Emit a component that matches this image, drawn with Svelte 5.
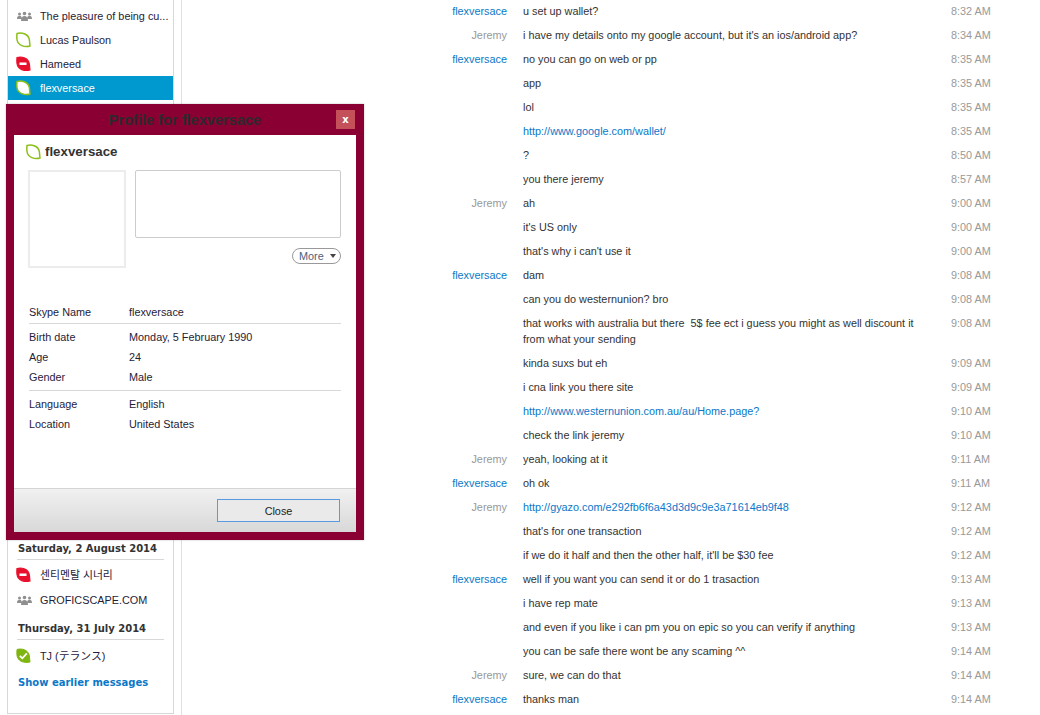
<script>
  const leaf = "M1 1.500C3 .9 6 .9 8.200 1.700c2.900 1 4.800 3.400 5.200 6.300.2 2 .4 4.300.6 6-2.200.6-6 .5-8.200-.4C3 12.500 1.300 10 1 7.500.7 5.500.8 3.500 1 1.500Z";
  const recent = [
    { s: "group", n: "The pleasure of being cu..." },
    { s: "away", n: "Lucas Paulson" },
    { s: "dnd", n: "Hameed" },
    { s: "away", n: "flexversace", sel: true }
  ];
  const F = "flexversace", J = "Jeremy";
  const chat = [
    [F, "u set up wallet?", "8:32 AM"],
    [J, "i have my details onto my google account, but it's an ios/android app?", "8:34 AM"],
    [F, "no you can go on web or pp", "8:35 AM"],
    ["", "app", "8:35 AM"],
    ["", "lol", "8:35 AM"],
    ["", "http://www.google.com/wallet/", "8:35 AM", 1],
    ["", "?", "8:50 AM"],
    ["", "you there jeremy", "8:57 AM"],
    [J, "ah", "9:00 AM"],
    ["", "it's US only", "9:00 AM"],
    ["", "that's why i can't use it", "9:00 AM"],
    [F, "dam", "9:08 AM"],
    ["", "can you do westernunion? bro", "9:08 AM"],
    ["", "that works with australia but there  5$ fee ect i guess you might as well discount it from what your sending", "9:08 AM"],
    ["", "kinda suxs but eh", "9:09 AM"],
    ["", "i cna link you there site", "9:09 AM"],
    ["", "http://www.westernunion.com.au/au/Home.page?", "9:10 AM", 1],
    ["", "check the link jeremy", "9:10 AM"],
    [J, "yeah, looking at it", "9:11 AM"],
    [F, "oh ok", "9:11 AM"],
    [J, "http://gyazo.com/e292fb6f6a43d3d9c9e3a71614eb9f48", "9:12 AM", 1],
    ["", "that's for one transaction", "9:12 AM"],
    ["", "if we do it half and then the other half, it'll be $30 fee", "9:12 AM"],
    [F, "well if you want you can send it or do 1 trasaction", "9:13 AM"],
    ["", "i have rep mate", "9:13 AM"],
    ["", "and even if you like i can pm you on epic so you can verify if anything", "9:13 AM"],
    ["", "you can be safe there wont be any scaming ^^", "9:14 AM"],
    [J, "sure, we can do that", "9:14 AM"],
    [F, "thanks man", "9:14 AM"]
  ];
</script>

{#snippet status(s, sel)}
  <svg class="ic" width="17" height="16" viewBox="0 0 17 16" aria-hidden="true">
    {#if s === "group"}
      <g fill="#8f8f8f">
        <circle cx="3.500" cy="6" r="1.500"/><circle cx="13.500" cy="6" r="1.500"/><circle cx="8.500" cy="5.500" r="1.800"/>
        <path d="M1 11c0-2 1-3.200 2.500-3.200S6 9 6 11ZM11 11c0-2 1-3.200 2.500-3.200S16 9 16 11Z"/>
        <path d="M5 13c0-3 1.300-5 3.500-5s3.500 2 3.500 5Z"/>
      </g>
    {:else if s === "away"}
      <path d={leaf} fill={sel ? "#fff" : "none"} stroke="#8cbf1a" stroke-width="1.500"/>
    {:else if s === "dnd"}
      <path d={leaf} fill="#e8112d" stroke="#e8112d" stroke-width="1.200"/>
      <rect x="3.500" y="6.500" width="7" height="2.500" fill="#fff"/>
    {:else}
      <path d={leaf} fill="#7fb510" stroke="#7fb510" stroke-width="1"/>
      <path d="M3.800 7.800l2.500 2.500 4.500-5" fill="none" stroke="#fff" stroke-width="1.800"/>
    {/if}
  </svg>
{/snippet}

<div class="page">
  <aside class="side">
    <div class="list top">
      {#each recent as r}
        <div class="row" class:sel={r.sel}>{@render status(r.s, r.sel)}<span>{r.n}</span></div>
      {/each}
    </div>
    <div class="list bottom">
      <div class="day">Saturday, 2 August 2014</div>
      <div class="row r1">{@render status("dnd")}<span>센티멘탈 시너리</span></div>
      <div class="row r2">{@render status("group")}<span>GROFICSCAPE.COM</span></div>
      <div class="day second">Thursday, 31 July 2014</div>
      <div class="row r3">{@render status("online")}<span>TJ (テランス)</span></div>
      <div class="earlier">Show earlier messages</div>
    </div>
  </aside>

  <main class="chat">
    {#each chat as m}
      <div class="msg">
        <div class="who" class:j={m[0] === J}>{m[0]}</div>
        <div class="text" class:link={m[3]}>{m[1]}</div>
        <div class="time">{m[2]}</div>
      </div>
    {/each}
  </main>

  <section class="modal">
    <header class="mhead">
      <h1>Profile for flexversace</h1>
      <button class="x">x</button>
    </header>
    <div class="mbody">
      <div class="content">
        <div class="pname">{@render status("away")}<strong>flexversace</strong></div>
        <div class="top-boxes">
          <div class="avatar"></div>
          <div class="right">
            <div class="mood"></div>
            <div class="more-wrap"><span class="more">More <i></i></span></div>
          </div>
        </div>
        <div class="group g1"><div class="d"><span>Skype Name</span><span>flexversace</span></div></div>
        <div class="group g2">
          <div class="d"><span>Birth date</span><span>Monday, 5 February 1990</span></div>
          <div class="d"><span>Age</span><span>24</span></div>
          <div class="d"><span>Gender</span><span>Male</span></div>
        </div>
        <div class="group g3">
          <div class="d"><span>Language</span><span>English</span></div>
          <div class="d"><span>Location</span><span>United States</span></div>
        </div>
      </div>
      <footer class="mfoot"><button class="close">Close</button></footer>
    </div>
  </section>
</div>

<style>
  :global(body) { margin: 0; background: #fff; }
  .page {
    position: relative;
    display: flex;
    height: 715px;
    width: 1040px;
    overflow: hidden;
    font: 10.85px/16px Tahoma, "Liberation Sans", "Noto Sans CJK KR", sans-serif;
    color: #222;
    background: #fff;
  }
  .side {
    box-sizing: border-box;
    width: 167px;
    height: 714px;
    margin-left: 7px;
    border: 1px solid #d8d8d8;
    border-top: 0;
    display: flex;
    flex-direction: column;
    justify-content: space-between;
    flex: none;
  }
  .chat {
    margin-left: 7px;
    border-left: 1px solid #e0e0e0;
    flex: 1;
    height: 716px;
    margin-top: -1px;
  }
  .list.top { padding-top: 4px; }
  .row {
    display: flex;
    align-items: center;
    height: 24px;
    padding-left: 8px;
    color: #1f2238;
  }
  .row span { margin-left: 7px; white-space: nowrap; }
  .ic { flex: none; }
  .sel { background: #0099cf; color: #fff; }
  .day {
    margin: 0 9px 0 9px;
    padding-left: 1px;
    height: 23px;
    border-bottom: 1px solid #d8d8d8;
    font: bold 10px/24px "DejaVu Sans", sans-serif;
    color: #333;
    box-sizing: border-box;
  }
  .bottom { padding-bottom: 20px; }
  .r1 { height: 26px; margin-top: 2px; }
  .r2 { height: 24px; }
  .day.second { margin-top: 5px; }
  .r3 { height: 28px; margin-top: 2px; }
  .earlier {
    margin: 3px 0 0 10px;
    font: bold 10px/20px "DejaVu Sans", sans-serif;
    color: #0a78c8;
  }
  .msg {
    display: flex;
    padding: 4px 0;
    min-height: 16px;
  }
  .who {
    width: 325px;
    flex: none;
    text-align: right;
    color: #0a78c8;
  }
  .who.j { color: #999; }
  .text {
    width: 396px;
    flex: none;
    margin-left: 16px;
    color: #333;
    white-space: pre-wrap;
  }
  .text.link { color: #0a78c8; }
  .time {
    margin-left: 32px;
    color: #999;
    white-space: nowrap;
  }
  .modal {
    position: absolute;
    left: 6px;
    top: 104px;
    width: 358px;
    height: 436px;
    box-sizing: border-box;
    background: #8b0033;
    padding: 0 8px 8px;
    display: flex;
    flex-direction: column;
    box-shadow: 0 0 2px rgba(0,0,0,.25);
  }
  .mhead {
    height: 31px;
    flex: none;
    position: relative;
    display: flex;
    align-items: center;
    justify-content: center;
  }
  h1 {
    margin: 0;
    font: bold 14.6px/20px "Liberation Sans", sans-serif;
    color: #2e2a2c;
  }
  .x {
    position: absolute;
    right: 1px;
    top: 6px;
    width: 19px;
    height: 19px;
    padding: 0;
    border: 0;
    background: #c4515a;
    color: #fff;
    font: bold 10px/17px "DejaVu Sans", sans-serif;
  }
  .mbody {
    flex: 1;
    background: #fff;
    display: flex;
    flex-direction: column;
    min-height: 0;
  }
  .content { flex: 1; padding: 9px 15px 0 14px; }
  .pname { display: flex; align-items: center; height: 16px; margin-left: -2px; }
  .pname strong {
    margin-left: 2px;
    font: bold 13.3px/16px "Liberation Sans", sans-serif;
    color: #333;
  }
  .top-boxes { display: flex; margin-top: 10px; height: 98px; }
  .avatar {
    box-sizing: border-box;
    width: 98px;
    height: 98px;
    border: 2px solid #ececec;
    flex: none;
  }
  .right { margin-left: 9px; flex: 1; }
  .mood {
    box-sizing: border-box;
    height: 68px;
    border: 1px solid #ccc;
    border-radius: 2px;
  }
  .more-wrap { display: flex; justify-content: flex-end; margin-top: 10px; }
  .more {
    box-sizing: border-box;
    width: 49px;
    height: 16px;
    border: 1px solid #999;
    border-radius: 8px;
    display: flex;
    align-items: center;
    padding-left: 6px;
    line-height: 14px;
    color: #4c5f80;
  }
  .more i {
    margin-left: 6px;
    border: 3.500px solid transparent;
    border-top: 4px solid #444;
    border-bottom: 0;
  }
  .group { margin-left: 1px; }
  .d { display: flex; height: 20px; line-height: 20px; color: #1f2238; }
  .d span:first-child { width: 100px; flex: none; }
  .g1 { margin-top: 34px; height: 21px; border-bottom: 1px solid #d8d8d8; }
  .g2 { padding-top: 3px; height: 63px; border-bottom: 1px solid #d8d8d8; }
  .g3 { padding-top: 3px; }
  .mfoot {
    flex: none;
    box-sizing: border-box;
    height: 44px;
    border-top: 1px solid #d4d4d4;
    background: linear-gradient(#f1f1f1, #d8d8d8);
    display: flex;
    justify-content: flex-end;
    padding: 10px 16px 0 0;
  }
  .close {
    box-sizing: border-box;
    width: 123px;
    height: 23px;
    border: 1px solid #5a9ae0;
    background: #eaeaea;
    color: #222;
    padding: 0;
    font: 10.85px/20px Tahoma, "Liberation Sans", sans-serif;
  }
</style>
